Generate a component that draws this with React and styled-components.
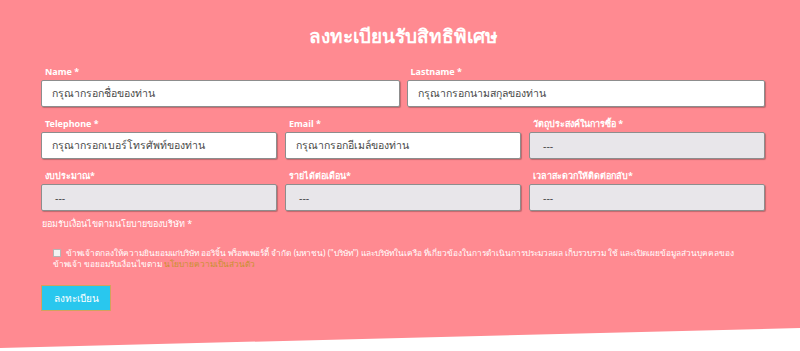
import React from 'react';
import styled, { createGlobalStyle } from 'styled-components';

////////////////////////////////////////////////////////////////////////////////////////////////////
// Page

const Global = createGlobalStyle`
  body {
    margin: 0;
    background: #ffffff;
    font-family: "Noto Sans", "DejaVu Sans", sans-serif;
  }
`;

const Section = styled.section`
  background: #ff8a91;
  padding: 19px 35px 37px 41px;
  clip-path: polygon(0 0, 100% 0, 100% calc(100% - 20px), 0 100%);
`;

const Title = styled.h1`
  margin: 0 0 13px;
  text-align: center;
  color: #ffffff;
  font-size: 19px;
  font-weight: 700;
  line-height: 34px;
`;

const Grid = styled.div`
  display: grid;
  grid-template-columns: repeat(${p => p.cols}, 1fr);
  column-gap: ${p => (p.cols === 2 ? 7 : 8)}px;
  margin-bottom: ${p => p.gap ?? 11}px;
`;

const Field = styled.label`
  display: flex;
  flex-direction: column;
`;

const Label = styled.span`
  color: #ffffff;
  font-size: 9px;
  font-weight: 700;
  line-height: 12px;
  padding-left: 4px;
  margin-bottom: 2px;
`;

const Input = styled.div`
  height: 27px;
  box-sizing: border-box;
  display: flex;
  align-items: center;
  padding-left: ${p => (p.select ? 13 : 10)}px;
  background: ${p => (p.select ? '#e8e6ea' : '#ffffff')};
  border: 1px solid #8d8d8d;
  border-radius: 2px;
  box-shadow: 1px 1px 1px rgba(0, 0, 0, 0.25);
  color: #4a4a4a;
  font-size: 10.5px;
`;

const Consent = styled.div`
  color: #ffffff;
  font-size: 9px;
  line-height: 12px;
  padding-left: 1px;
`;

const Check = styled.div`
  margin: 17px 0 0 12px;
  color: #ffffff;
  font-size: 8.3px;
  line-height: 11px;
  padding-right: 22px;
`;

const Box = styled.span`
  display: inline-block;
  width: 6px;
  height: 6px;
  background: #f2f2f2;
  border: 1px solid #b5b5b5;
  margin-right: 5px;
  vertical-align: -1px;
`;

const Link = styled.a`
  color: #c9912f;
`;

const Button = styled.button`
  display: block;
  margin-top: 16px;
  width: 70px;
  height: 26px;
  background: #29c7ee;
  border: 1px solid #d3a25c;
  color: #ffffff;
  font-family: inherit;
  font-size: 10px;
  padding: 0;
`;

function F({ label, value, select }) {
  return (
    <Field>
      <Label>{label}</Label>
      <Input select={select}>{value}</Input>
    </Field>
  );
}

export default function App() {
  return (
    <>
      <Global />
      <Section>
        <Title>ลงทะเบียนรับสิทธิพิเศษ</Title>
        <Grid cols={2}>
          <F label="Name *" value="กรุณากรอกชื่อของท่าน" />
          <F label="Lastname *" value="กรุณากรอกนามสกุลของท่าน" />
        </Grid>
        <Grid cols={3}>
          <F label="Telephone *" value="กรุณากรอกเบอร์โทรศัพท์ของท่าน" />
          <F label="Email *" value="กรุณากรอกอีเมล์ของท่าน" />
          <F label="วัตถุประสงค์ในการซื้อ *" value="---" select />
        </Grid>
        <Grid cols={3} gap={7}>
          <F label="งบประมาณ*" value="---" select />
          <F label="รายได้ต่อเดือน*" value="---" select />
          <F label="เวลาสะดวกให้ติดต่อกลับ*" value="---" select />
        </Grid>
        <Consent>ยอมรับเงื่อนไขตามนโยบายของบริษัท *</Consent>
        <Check>
          <Box />
          ข้าพเจ้าตกลงให้ความยินยอมแก่บริษัท ออริจิ้น พร็อพเพอร์ตี้ จำกัด (มหาชน) ("บริษัท") และบริษัทในเครือ ที่เกี่ยวข้องในการดำเนินการประมวลผล เก็บรวบรวม ใช้ และเปิดเผยข้อมูลส่วนบุคคลของ ข้าพเจ้า ขอยอมรับเงื่อนไขตาม{' '}
          <Link>นโยบายความเป็นส่วนตัว</Link>
        </Check>
        <Button>ลงทะเบียน</Button>
      </Section>
    </>
  );
}
